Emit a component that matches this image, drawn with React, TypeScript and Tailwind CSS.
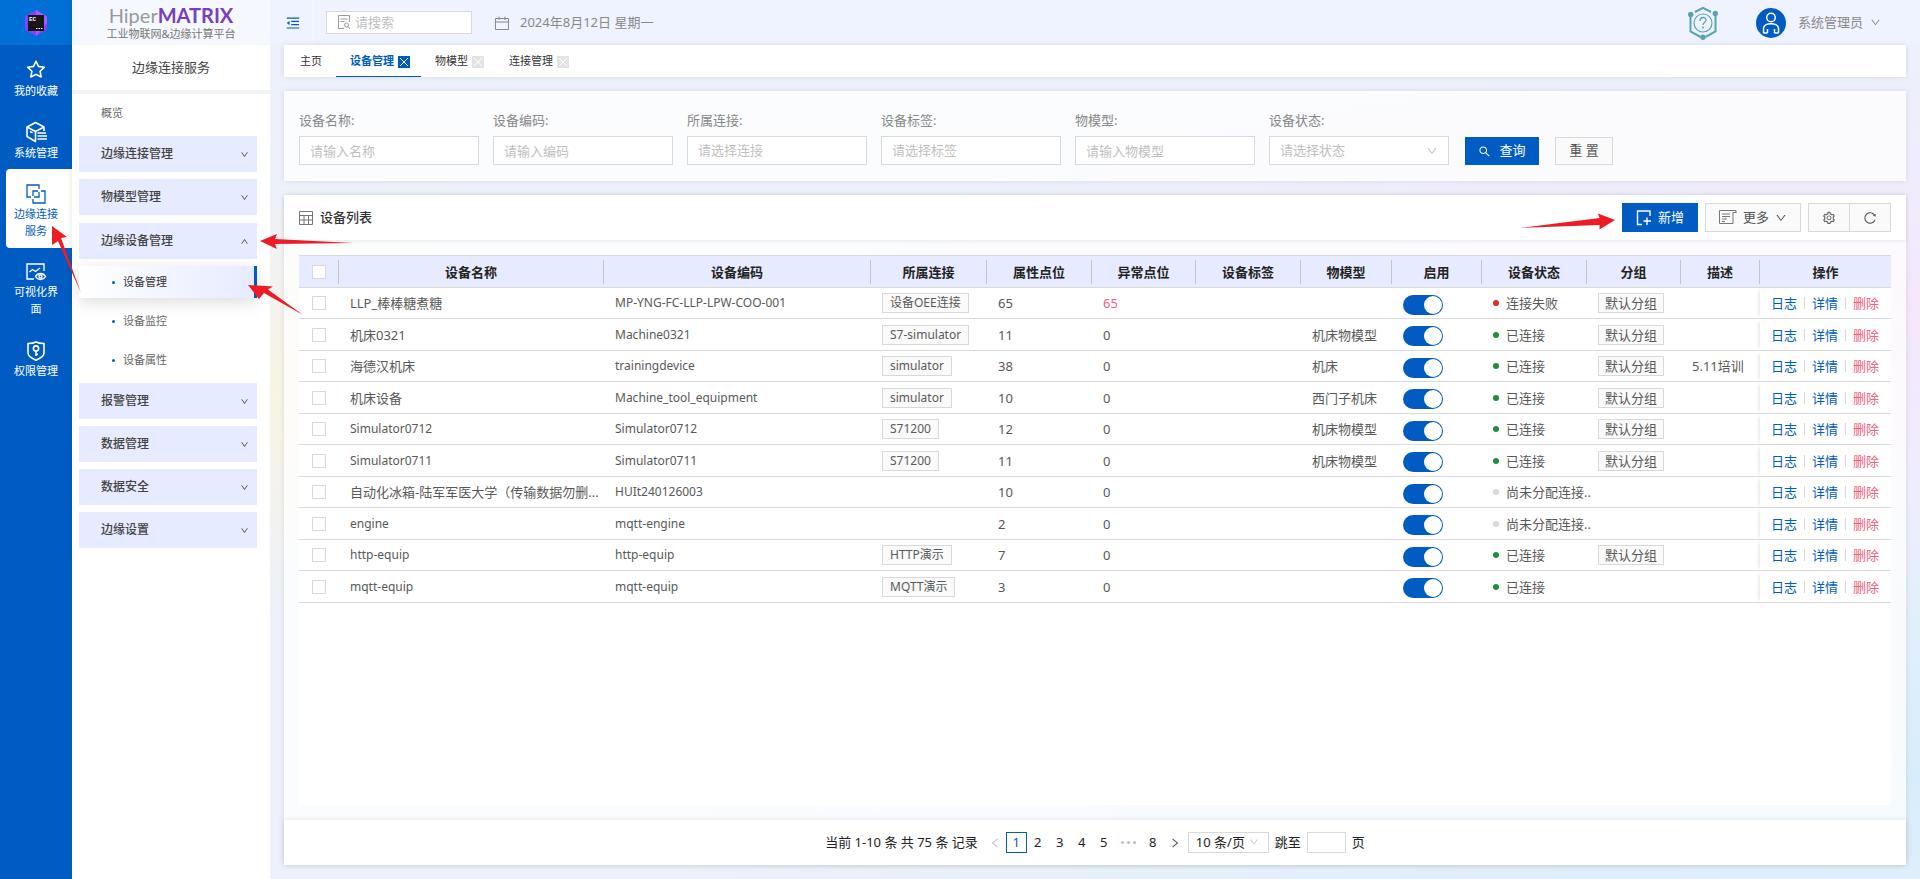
import React from "react";
import {
  AiOutlineStar,
  AiOutlineDown,
  AiOutlineLeft,
  AiOutlineMenuFold,
  AiOutlineReload,
  AiOutlineRight,
  AiOutlineSearch,
  AiOutlineSetting,
  AiOutlineUp,
} from "react-icons/ai";

const railItems = [
  { key: "fav", label: "我的收藏", icon: <AiOutlineStar className="size-[22px]" /> },
  { key: "sys", label: "系统管理", icon: <CubeIcon /> },
  { key: "edge", label: "边缘连接服务", icon: <LinkIcon />, active: true },
  { key: "visual", label: "可视化界面", icon: <ChartEyeIcon />, tall: true },
  { key: "auth", label: "权限管理", icon: <ShieldIcon /> },
];

const menuGroups = [
  { label: "边缘连接管理" },
  { label: "物模型管理" },
  { label: "边缘设备管理", children: ["设备管理", "设备监控", "设备属性"] },
  { label: "报警管理" },
  { label: "数据管理" },
  { label: "数据安全" },
  { label: "边缘设置" },
];

const tabs = [
  { label: "设备管理", active: true },
  { label: "物模型" },
  { label: "连接管理" },
];

const filters = [
  { id: "name", label: "设备名称", placeholder: "请输入名称" },
  { id: "code", label: "设备编码", placeholder: "请输入编码" },
  { id: "conn", label: "所属连接", placeholder: "请选择连接", select: true },
  { id: "tag", label: "设备标签", placeholder: "请选择标签", select: true },
  { id: "model", label: "物模型", placeholder: "请输入物模型" },
  { id: "status", label: "设备状态", placeholder: "请选择状态", select: true, arrow: true },
];

const columns = [
  { title: "设备名称", width: 265 },
  { title: "设备编码", width: 267 },
  { title: "所属连接", width: 116 },
  { title: "属性点位", width: 105 },
  { title: "异常点位", width: 104 },
  { title: "设备标签", width: 105 },
  { title: "物模型", width: 91 },
  { title: "启用", width: 90 },
  { title: "设备状态", width: 105 },
  { title: "分组", width: 94 },
  { title: "描述", width: 79 },
  { title: "操作", width: 131 },
];

const devices = [
  { name: "LLP_棒棒糖煮糖", code: "MP-YNG-FC-LLP-LPW-COO-001", conn: "设备OEE连接", points: 65, errors: 65, model: "", status: "fail", group: "默认分组", desc: "" },
  { name: "机床0321", code: "Machine0321", conn: "S7-simulator", points: 11, errors: 0, model: "机床物模型", status: "ok", group: "默认分组", desc: "" },
  { name: "海德汉机床", code: "trainingdevice", conn: "simulator", points: 38, errors: 0, model: "机床", status: "ok", group: "默认分组", desc: "5.11培训" },
  { name: "机床设备", code: "Machine_tool_equipment", conn: "simulator", points: 10, errors: 0, model: "西门子机床", status: "ok", group: "默认分组", desc: "" },
  { name: "Simulator0712", code: "Simulator0712", conn: "S71200", points: 12, errors: 0, model: "机床物模型", status: "ok", group: "默认分组", desc: "" },
  { name: "Simulator0711", code: "Simulator0711", conn: "S71200", points: 11, errors: 0, model: "机床物模型", status: "ok", group: "默认分组", desc: "" },
  { name: "自动化冰箱-陆军军医大学（传输数据勿删...", code: "HUIt240126003", conn: "", points: 10, errors: 0, model: "", status: "none", group: "", desc: "" },
  { name: "engine", code: "mqtt-engine", conn: "", points: 2, errors: 0, model: "", status: "none", group: "", desc: "" },
  { name: "http-equip", code: "http-equip", conn: "HTTP演示", points: 7, errors: 0, model: "", status: "ok", group: "默认分组", desc: "" },
  { name: "mqtt-equip", code: "mqtt-equip", conn: "MQTT演示", points: 3, errors: 0, model: "", status: "ok", group: "", desc: "" },
];

const statusMap = {
  ok: { text: "已连接", dot: "bg-[#1e8e3e]" },
  fail: { text: "连接失败", dot: "bg-[#d93025]" },
  none: { text: "尚未分配连接..", dot: "bg-[#d9d9d9]" },
};

function CubeIcon() {
  return (
    <svg viewBox="0 0 22 22" className="size-[22px]" fill="none" stroke="currentColor" strokeWidth="1.6" strokeLinejoin="round">
      <path d="M19 10V6L10.500 1.500 2 6v9.500l8.500 5V11" />
      <path d="M2 6l8.500 4.500L19 6M5 10.500l2.500 1.300" />
      <path d="M12.500 12H21M12.500 15H22M12.500 18H22" strokeWidth="1.500" />
    </svg>
  );
}

function LinkIcon() {
  return (
    <svg viewBox="0 0 20 20" className="size-5" fill="none" stroke="currentColor" strokeWidth="1.3">
      <path d="M5 13H1V1h12v4" />
      <path d="M15 7h4v12H7v-4" />
      <path d="M7 12V7h5M13 8v5H8" />
    </svg>
  );
}

function ChartEyeIcon() {
  return (
    <svg viewBox="0 0 22 20" className="h-5 w-[22px]" fill="none" stroke="currentColor" strokeWidth="1.4">
      <path d="M9 17H2V2h17v7" />
      <path d="M4.500 10l3-2.500 3 2 4.500-3.500" />
      <path d="M10.500 14.500c2.500-4 7.500-4 10 0-2.500 4-7.500 4-10 0z" />
      <circle cx="15.500" cy="14.500" r="1.500" />
    </svg>
  );
}

function ShieldIcon() {
  return (
    <svg viewBox="0 0 20 20" className="size-5" fill="none" stroke="currentColor" strokeWidth="1.600">
      <path d="M10 1c3 1.500 5.500 1.500 8 1.500V12c0 3.500-4 5.500-8 7.200C6 17.500 2 15.500 2 12V2.500C4.500 2.500 7 2.500 10 1z" />
      <circle cx="10" cy="7.500" r="2.600" />
      <path d="M10 10v5M10 13.200h2" />
    </svg>
  );
}

function LogoIcon() {
  return (
    <svg viewBox="0 0 22 26" className="h-[26px] w-[22px]">
      <path d="M11 0l11 6.500v13L11 26 0 19.500v-13z" fill="#8a3ffc" />
      <path d="M11 0l11 6.500v6L11 26z" fill="#a45bff" />
      <rect x="3" y="5" width="16" height="16" fill="#161616" />
      <text x="4" y="11" fontSize="6" fontWeight="700" fill="#fff" fontFamily="Liberation Mono, monospace">EC</text>
      <path d="M11 18.500h1.500M13.500 18.500H15M16 18.500h1.500" stroke="#fff" />
    </svg>
  );
}

function HelpIcon() {
  return (
    <svg viewBox="0 0 30 34" className="h-[34px] w-[30px]" fill="none" stroke="#5aa3b5" strokeWidth="2">
      <path d="M7 6l8-4.200L23 6M2.500 9v16.500l10 5.500M27.500 8v17.500L17.500 31" />
      <circle cx="15" cy="17" r="9" strokeWidth="1.200" />
      <path d="M12 15c0-4.500 6-4.500 6-1 0 2.500-3 2.500-3 5" strokeWidth="1.300" />
      <g fill="#5aa3b5" stroke="none">
        <circle cx="2.700" cy="8.500" r="2.700" />
        <circle cx="27.300" cy="7.500" r="2.700" />
        <circle cx="15" cy="31.300" r="2.700" />
        <circle cx="15" cy="21.500" r="1" />
      </g>
    </svg>
  );
}

function AvatarIcon() {
  return (
    <svg viewBox="0 0 30 30" className="size-[30px]" fill="none" stroke="#fff" strokeWidth="1.500">
      <circle cx="15" cy="15" r="15" fill="#005cc2" stroke="none" />
      <circle cx="15" cy="9.500" r="4.300" />
      <path d="M7.500 25v-4.500c0-6.500 15-6.500 15 0V25M11.500 25v-4M18.500 25v-4M7.500 25h4M18.500 25h4" />
    </svg>
  );
}

function CalendarIcon() {
  return (
    <svg viewBox="0 0 14 14" className="size-3.5" fill="none" stroke="currentColor">
      <path d="M.5 2.500h13v11H.5zM.5 6h13M4 .5v3.500M10 .5v3.500" />
    </svg>
  );
}

function FileSearchIcon() {
  return (
    <svg viewBox="0 0 13 15" className="h-[15px] w-[13px] shrink-0" fill="none" stroke="#999">
      <path d="M6 13.500H.5V.5h11V7M2.500 4h7M2.500 6.500h4" />
      <circle cx="8.500" cy="10" r="2" />
      <path d="M10 11.500l2 2.500" />
    </svg>
  );
}

function TableIcon() {
  return (
    <svg viewBox="0 0 14 14" className="size-3.5" fill="none" stroke="#777">
      <path d="M.5.5h13v13H.5zM.5 4.500h13M.5 9h13M5 4.500v9M9.500 4.500v9" />
    </svg>
  );
}

function AddIcon() {
  return (
    <svg viewBox="0 0 16 16" className="size-4" fill="none" stroke="currentColor" strokeWidth="1.400">
      <path d="M6 14.500H1.500V1H14v5M11 7.500v7.500M7.500 11h7.500" />
    </svg>
  );
}

function MoreIcon() {
  return (
    <svg viewBox="0 0 18 15" className="h-[15px] w-[18px]" fill="none" stroke="#777">
      <path d="M17 2.500V.5H.5v13H14V2.500h3.500M3 4h8M3 6.500h8M3 9h5M3 11.500h3" />
    </svg>
  );
}

function Switch({ label }) {
  return (
    <input
      type="checkbox"
      role="switch"
      aria-label={label}
      defaultChecked
      className="mt-[3px] block h-5 w-10 appearance-none rounded-full bg-gray-300 before:mt-px before:ml-px before:block before:size-[18px] before:rounded-full before:bg-white checked:bg-[#005cc2] checked:before:ml-[21px]"
    />
  );
}

function railClass(item) {
  if (item.active) {
    return "ml-1.5 flex h-[79px] flex-col items-center gap-px rounded-l-sm bg-white pt-[15px] pr-1.5 text-[#005cc2]";
  }
  return item.tall
    ? "flex h-[79px] flex-col items-center gap-px pt-3.5"
    : "flex h-[62px] flex-col items-center gap-px pt-3.5";
}

function Rail() {
  return (
    <aside className="flex w-[72px] shrink-0 flex-col bg-[#005cc2] text-white">
      <div className="flex h-[45px] items-center justify-center bg-[#0070d6]">
        <LogoIcon />
      </div>
      <nav className="flex flex-col">
        {railItems.map((item) => (
          <a key={item.key} href="#" className={railClass(item)}>
            {item.icon}
            <span className="w-[44px] text-center text-[11px] leading-[17px]">{item.label}</span>
          </a>
        ))}
      </nav>
    </aside>
  );
}

function Sidebar() {
  return (
    <aside className="flex w-[198px] shrink-0 flex-col bg-white shadow-[0_0_6px_rgba(0,0,0,0.1)]">
      <div className="flex h-[45px] flex-col items-center bg-[#f5f8ff] pt-px">
        <div className="font-[Lato] text-[20px] leading-7 text-[#9a9a9a]">
          Hiper<b className="text-[#7640bd]">MATRIX</b>
        </div>
        <div className="text-[11px] leading-[10px] text-[#777]">工业物联网&amp;边缘计算平台</div>
      </div>
      <h2 className="flex h-[49px] items-center justify-center border-b-4 border-[#f2f3f6] text-[13px] text-[#444]">
        边缘连接服务
      </h2>
      <nav className="flex flex-col gap-[7px] px-[7px] text-[12px]">
        <a href="#" className="flex h-[35px] items-center px-[22px] pt-1 text-[11px] text-[#666]">
          概览
        </a>
        {menuGroups.map((group) => (
          <div key={group.label} className={group.children ? "mt-px flex flex-col" : "flex flex-col"}>
            <button className="flex h-9 w-[178px] items-center justify-between bg-[#e6ebff] pr-2 pl-[22px] font-medium text-[#444]">
              {group.label}
              {group.children ? <AiOutlineUp className="size-[9px]" /> : <AiOutlineDown className="size-[9px]" />}
            </button>
            {group.children && (
              <ul className="mt-[7px] flex w-[178px] flex-col gap-[7px]">
                {group.children.map((child, i) => (
                  <li key={child}>
                    <a
                      href="#"
                      className={
                        i === 0
                          ? "flex h-8 items-center gap-2 border-r-3 border-[#005cc2] bg-linear-to-r from-white to-[#e6ebff] pl-[33px] text-[11px] text-[#333] shadow-[0_4px_16px_rgba(0,0,0,0.14)]"
                          : "flex h-8 items-center gap-2 pl-[33px] text-[11px] text-[#666]"
                      }
                    >
                      <i className="size-[3px] rounded-full bg-[#005cc2]" />
                      {child}
                    </a>
                  </li>
                ))}
              </ul>
            )}
          </div>
        ))}
      </nav>
    </aside>
  );
}

function Header() {
  return (
    <header className="flex h-[45px] items-center bg-[#eff3ff] pr-[39px] text-[13px] text-[#888]">
      <button aria-label="收起菜单" className="flex h-full w-11 items-center border-r border-white/40 pl-[15px] text-[#005cc2]">
        <AiOutlineMenuFold className="size-4" />
      </button>
      <label className="ml-3 flex h-[23px] w-[146px] items-center gap-1 border border-[#d9d9d9] bg-white pl-[11px]">
        <FileSearchIcon />
        <input aria-label="搜索" placeholder="请搜索" className="w-full min-w-0 outline-none placeholder:text-[#bfbfbf]" />
      </label>
      <div className="ml-[23px] flex items-center gap-[11px]">
        <CalendarIcon />
        2024年8月12日 星期一
      </div>
      <div className="ml-auto flex items-center">
        <HelpIcon />
        <button className="ml-[38px] flex items-center">
          <AvatarIcon />
          <span className="mr-[7px] ml-3">系统管理员</span>
          <AiOutlineDown className="size-[11px]" />
        </button>
      </div>
    </header>
  );
}

function TabBar() {
  return (
    <nav className="flex h-8 bg-white text-[11px] text-[#333] shadow-[0_0_6px_rgba(0,0,0,0.1)]">
      <a href="#" className="flex items-center pt-px pr-3.5 pl-4">主页</a>
      {tabs.map((tab) => (
        <div
          key={tab.label}
          className={
            tab.active
              ? "flex items-center gap-1 border-b border-[#005cc2] pt-0.5 pr-[11px] pl-3.5 font-bold text-[#005cc2]"
              : "flex items-center gap-1 border-b border-transparent pt-0.5 pr-[11px] pl-3.5"
          }
        >
          <a href="#">{tab.label}</a>
          <button
            aria-label={"关闭" + tab.label}
            className={
              tab.active
                ? "flex size-3 items-center justify-center bg-[#005cc2] text-white"
                : "flex size-3 items-center justify-center bg-[#e3e3e3] text-white"
            }
          >
            <svg viewBox="0 0 8 8" className="size-2" stroke="currentColor">
              <path d="M0 0l8 8M8 0L0 8" />
            </svg>
          </button>
        </div>
      ))}
    </nav>
  );
}

function FilterCard() {
  return (
    <form className="flex items-end gap-3.5 bg-white/75 px-[15px] pt-5 pb-4 text-[13px] shadow-[0_0_6px_rgba(0,0,0,0.1)]">
      {filters.map((f) => (
        <div key={f.id} className="flex w-[180px] flex-col gap-[7px]">
          <label htmlFor={f.id} className="leading-[18px] text-[#888]">{f.label}:</label>
          {f.select ? (
            <div className="relative">
              <select id={f.id} className="h-[29px] w-full appearance-none border border-[#d9d9d9] bg-white px-2.5 text-[#bfbfbf]">
                <option>{f.placeholder}</option>
              </select>
              {f.arrow && <AiOutlineDown className="pointer-events-none absolute top-[9px] right-[11px] size-3 text-[#bfbfbf]" />}
            </div>
          ) : (
            <input id={f.id} placeholder={f.placeholder} className="h-[29px] border border-[#d9d9d9] bg-white px-2.5 placeholder:text-[#bfbfbf]" />
          )}
        </div>
      ))}
      <div className="flex gap-4 pl-0.5">
        <button type="button" className="flex h-7 w-[74px] items-center justify-center gap-2 bg-[#005cc2] text-white">
          <AiOutlineSearch className="size-[13px]" />
          查询
        </button>
        <button type="button" className="h-7 w-[58px] border border-[#d9d9d9] bg-[#fafafa] text-[#555]">重 置</button>
      </div>
    </form>
  );
}

function DeviceTable() {
  return (
    <table className="w-full table-fixed border-separate border-spacing-0 text-[13px] text-[#595959]">
      <colgroup>
        <col width={40} />
        {columns.map((c) => (
          <col key={c.title} width={c.width} />
        ))}
      </colgroup>
      <thead>
        <tr className="h-[33px] text-[#222]">
          <th className="border-y border-[#d9d9d9] bg-[#e6ebff] p-0">
            <div className="flex h-6 items-center border-r border-[#c4c4c4] pl-[13px]">
              <input type="checkbox" aria-label="全选" className="size-3.5 appearance-none border border-[#d9d9d9] bg-white" />
            </div>
          </th>
          {columns.map((c, i) => (
            <th key={c.title} className="border-y border-[#d9d9d9] bg-[#e6ebff] p-0">
              <div className={i < columns.length - 1 ? "h-6 border-r border-[#c4c4c4] leading-6" : "h-6 leading-6"}>{c.title}</div>
            </th>
          ))}
        </tr>
      </thead>
      <tbody className="[&_td]:border-b [&_td]:border-[#d9d9d9] [&_td]:py-0 [&_td]:pr-0 [&_td]:pl-[11px] [&_td]:leading-5 [&_td]:whitespace-nowrap">
        {devices.map((d) => (
          <tr key={d.name} className="odd:h-[31px] even:h-8">
            <td>
              <input type="checkbox" aria-label={d.name} className="ml-0.5 block size-3.5 appearance-none border border-[#d9d9d9] bg-white" />
            </td>
            {/* plain latin names are set one size down, next to the chinese ones */}
            <td className={/^[\w-]+$/.test(d.name) ? "text-xs" : ""}>{d.name}</td>
            <td className="text-xs">{d.code}</td>
            <td>
              {d.conn && (
                <span className="block h-5 w-fit border border-[#d9d9d9] bg-[#fafafa] px-[7px] text-xs leading-[18px]">{d.conn}</span>
              )}
            </td>
            <td>{d.points}</td>
            <td className={d.errors > 0 ? "text-[#f5617c]" : ""}>{d.errors}</td>
            <td />
            <td>{d.model}</td>
            <td>
              <Switch label={d.name + "启用"} />
            </td>
            <td>
              <span className="flex items-center gap-[7px]">
                <i className={"size-1.5 shrink-0 rounded-full " + statusMap[d.status].dot} />
                {statusMap[d.status].text}
              </span>
            </td>
            <td>
              {d.group && (
                <span className="block h-5 w-fit border border-[#d9d9d9] bg-[#fafafa] px-1.5 leading-[18px]">{d.group}</span>
              )}
            </td>
            <td>{d.desc}</td>
            <td className="bg-white shadow-[-4px_0_4px_-3px_rgba(0,0,0,0.12)]">
              <span className="flex items-center gap-[7px] text-[#005cc2]">
                <a href="#">日志</a>
                <i className="h-3 w-px bg-[#d9d9d9]" />
                <a href="#">详情</a>
                <i className="h-3 w-px bg-[#d9d9d9]" />
                <a href="#" className="text-[#f5617c]">删除</a>
              </span>
            </td>
          </tr>
        ))}
      </tbody>
    </table>
  );
}

function Pagination() {
  return (
    <footer className="flex h-[45px] items-center justify-center bg-white text-[13px] text-[#222] shadow-[0_0_6px_rgba(0,0,0,0.1)]">
      <span className="mr-1.5">当前 1-10 条 共 75 条 记录</span>
      <button aria-label="上一页" className="flex w-[22px] justify-center text-[#bfbfbf]">
        <AiOutlineLeft className="size-3" />
      </button>
      <button className="h-[21px] w-[21px] border border-[#005cc2] leading-[19px] text-[#005cc2]">1</button>
      {[2, 3, 4, 5].map((n) => (
        <button key={n} className="w-[22px]">{n}</button>
      ))}
      <span className="flex w-[27px] justify-center gap-[3px]">
        <i className="size-[3px] rounded-full bg-[#bfbfbf]" />
        <i className="size-[3px] rounded-full bg-[#bfbfbf]" />
        <i className="size-[3px] rounded-full bg-[#bfbfbf]" />
      </span>
      <button className="w-[22px]">8</button>
      <button aria-label="下一页" className="flex w-[22px] justify-center text-[#444]">
        <AiOutlineRight className="size-3" />
      </button>
      <div className="relative mr-1.5 ml-0.5">
        <select aria-label="每页条数" className="h-[21px] w-[81px] appearance-none border border-[#d9d9d9] bg-white pl-[7px]">
          <option>10 条/页</option>
        </select>
        <AiOutlineDown className="pointer-events-none absolute top-[5px] right-2.5 size-2.5 text-[#bfbfbf]" />
      </div>
      <label htmlFor="jump">跳至</label>
      <input id="jump" className="mx-1.5 h-[21px] w-[39px] border border-[#d9d9d9]" />
      页
    </footer>
  );
}

function ListCard() {
  return (
    <section className="flex flex-1 flex-col bg-white/75 shadow-[0_0_6px_rgba(0,0,0,0.1)]">
      <div className="flex h-[45px] items-center bg-white px-[15px] text-[13px] text-[#555] shadow-[0_1px_4px_rgba(0,0,0,0.08)]">
        <TableIcon />
        <h3 className="ml-[7px] font-medium text-[#333]">设备列表</h3>
        <button className="ml-auto flex h-[29px] w-[76px] items-center justify-center gap-1.5 bg-[#005cc2] text-white">
          <AddIcon />
          新增
        </button>
        <button className="ml-[7px] flex h-[29px] w-24 items-center justify-center gap-1.5 border border-[#d9d9d9] bg-[#fafafa]">
          <MoreIcon />
          更多
          <AiOutlineDown className="size-3" />
        </button>
        <button aria-label="设置" className="ml-[7px] flex h-[29px] w-[42px] items-center justify-center border border-[#d9d9d9] bg-[#fafafa]">
          <AiOutlineSetting className="size-3.5" />
        </button>
        <button aria-label="刷新" className="-ml-px flex h-[29px] w-[42px] items-center justify-center border border-[#d9d9d9] bg-[#fafafa]">
          <AiOutlineReload className="size-3.5" />
        </button>
      </div>
      <div className="flex flex-1 flex-col p-[15px]">
        <div className="flex-1 bg-white">
          <DeviceTable />
        </div>
      </div>
      <Pagination />
    </section>
  );
}

// red guide arrows laid over the page
function GuideArrows() {
  return (
    <svg className="pointer-events-none absolute top-0 left-0" width="1640" height="330" fill="#ed1c24">
      <path d="M52 226l15 11-6 1 20 55-23-52-6 4z" />
      <path d="M260 241l17-7-2 5 78 4-78 1 2 5z" />
      <path d="M248 285l25 1.500-5 3 35 25.500-39-22-5 6z" />
      <path d="M1615 220l-17-6.500 1.500 4.500-80.500 10 80.500-3v4.500z" />
    </svg>
  );
}

export default function App() {
  return (
    <div className="relative flex min-h-screen font-['Noto_Sans','Noto_Sans_CJK_SC',sans-serif]">
      <Rail />
      <Sidebar />
      <main className="flex min-w-0 flex-1 flex-col bg-[radial-gradient(ellipse_500px_230px_at_0%_45%,#f9f4e4,transparent),radial-gradient(ellipse_1100px_260px_at_100%_36%,#f5e7fc,transparent),radial-gradient(ellipse_1300px_300px_at_100%_88%,#d8edfb,transparent)] bg-[#ecf1fb]">
        <Header />
        <div className="flex flex-1 flex-col gap-3.5 px-3.5 pb-3.5">
          <TabBar />
          <FilterCard />
          <ListCard />
        </div>
      </main>
      <GuideArrows />
    </div>
  );
}
